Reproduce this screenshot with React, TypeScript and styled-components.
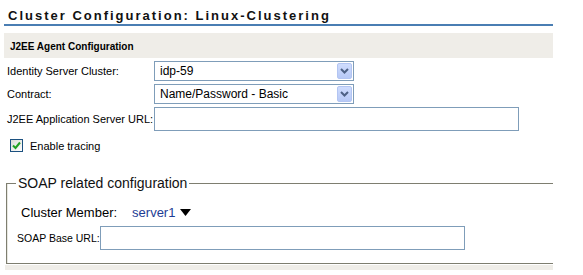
import React from "react"
import styled, { createGlobalStyle } from "styled-components"

const GlobalStyle = createGlobalStyle`
  body {
    margin: 0;
    background: #fff;
    font-family: "Liberation Sans", Arial, sans-serif;
    color: #000;
  }
`

const ChevronIcon = () => (
  <svg width="9" height="6" viewBox="0 0 9 6">
    <path d="M1 1 L4.5 4.5 L8 1" fill="none" stroke="#4d6185" strokeWidth="2" />
  </svg>
)

const CheckIcon = () => (
  <svg width="9" height="9" viewBox="0 0 9 9">
    <path d="M1 4.5 L3.5 7 L8 1.5" fill="none" stroke="#21a121" strokeWidth="2" />
  </svg>
)

const DropTriangle = () => (
  <svg width="11" height="7" viewBox="0 0 11 7">
    <path d="M0 0 H11 L5.5 7 Z" fill="#000" />
  </svg>
)

const App: React.FC = () => (
  <Page>
    <GlobalStyle />
    <Title>Cluster Configuration: Linux-Clustering</Title>

    <SectionHeader>J2EE Agent Configuration</SectionHeader>

    <FormGrid>
      <Label>Identity Server Cluster:</Label>
      <Select>
        <SelectValue>idp-59</SelectValue>
        <SelectButton>
          <ChevronIcon />
        </SelectButton>
      </Select>

      <Label>Contract:</Label>
      <Select>
        <SelectValue>Name/Password - Basic</SelectValue>
        <SelectButton>
          <ChevronIcon />
        </SelectButton>
      </Select>

      <Label>J2EE Application Server URL:</Label>
      <TextInput />
    </FormGrid>

    <CheckRow>
      <CheckBox>
        <CheckIcon />
      </CheckBox>
      <CheckLabel>Enable tracing</CheckLabel>
    </CheckRow>

    <Group>
      <GroupLegend>SOAP related configuration</GroupLegend>

      <MemberRow>
        <MemberLabel>Cluster Member:</MemberLabel>
        <MemberValue>server1</MemberValue>
        <DropTriangle />
      </MemberRow>

      <UrlRow>
        <SmallLabel>SOAP Base URL:</SmallLabel>
        <TextInput $width={365} />
      </UrlRow>
    </Group>

    <FooterBand />
  </Page>
)

const Page = styled.div`
  width: 549px;
  padding-left: 4px;
`

const Title = styled.div`
  padding: 8px 0 0 4px;
  height: 16px;
  line-height: 16px;
  font-size: 13px;
  font-weight: bold;
  letter-spacing: 2px;
  color: #111;
  border-bottom: 2px solid #4a7eb3;
`

const SectionHeader = styled.div`
  margin-top: 7px;
  height: 25px;
  line-height: 27px;
  padding-left: 6px;
  background: #efede8;
  font-size: 10px;
  font-weight: bold;
`

const FormGrid = styled.div`
  display: grid;
  grid-template-columns: 150px auto;
  row-gap: 3px;
  margin-top: 3px;
  align-items: center;
`

const Label = styled.div`
  padding-left: 3px;
  font-size: 11px;
  white-space: nowrap;
`

const Select = styled.div`
  display: flex;
  align-items: center;
  justify-content: space-between;
  box-sizing: border-box;
  width: 200px;
  height: 20px;
  padding: 1px;
  border: 1px solid #7f9db9;
  background: #fff;
`

const SelectValue = styled.span`
  padding-left: 4px;
  font-size: 12px;
`

const SelectButton = styled.span`
  display: flex;
  align-items: center;
  justify-content: center;
  width: 15px;
  height: 16px;
  border-radius: 2px;
  background: linear-gradient(#cfdcfd, #b7c9f6);
  border: 1px solid #b3c5f2;
  box-sizing: border-box;
`

const TextInput = styled.div<{ $width?: number }>`
  box-sizing: border-box;
  flex: none;
  width: ${({ $width }) => $width ?? 365}px;
  height: 24px;
  border: 1px solid #7f9db9;
  background: #fff;
`

const CheckRow = styled.div`
  display: flex;
  align-items: center;
  gap: 7px;
  margin-top: 8px;
  padding-left: 6px;
`

const CheckBox = styled.span`
  display: flex;
  align-items: center;
  justify-content: center;
  box-sizing: border-box;
  width: 13px;
  height: 13px;
  border: 1px solid #1c5180;
  background: linear-gradient(135deg, #dcdcd5, #fff);
`

const CheckLabel = styled.span`
  font-size: 11px;
`

const Group = styled.fieldset`
  margin: 23px 0 0 2px;
  padding: 0 0 13px 9px;
  min-width: 0;
  border: 1px solid #7e7e70;
  border-right: none;
  box-shadow: inset 1px 0 0 #e8e8e0;
`

const GroupLegend = styled.legend`
  padding: 0 2px;
  font-size: 14px;
  line-height: 16px;
  color: #111;
`

const MemberRow = styled.div`
  display: flex;
  align-items: center;
  height: 26px;
  margin-top: 8px;
  padding-left: 5px;
`

const MemberLabel = styled.span`
  font-size: 13px;
  margin-right: 15px;
`

const MemberValue = styled.span`
  font-size: 13px;
  color: #1d3c94;
  margin-right: 5px;
`

const UrlRow = styled.div`
  display: flex;
  align-items: center;
  margin-top: 1px;
  padding-left: 1px;
`

const SmallLabel = styled.span`
  flex: 0 0 83px;
  min-width: 0;
  font-size: 10.5px;
  white-space: nowrap;
`

const FooterBand = styled.div`
  margin: 1px 0 0 1px;
  height: 5px;
  background: #efede8;
`

export default App
